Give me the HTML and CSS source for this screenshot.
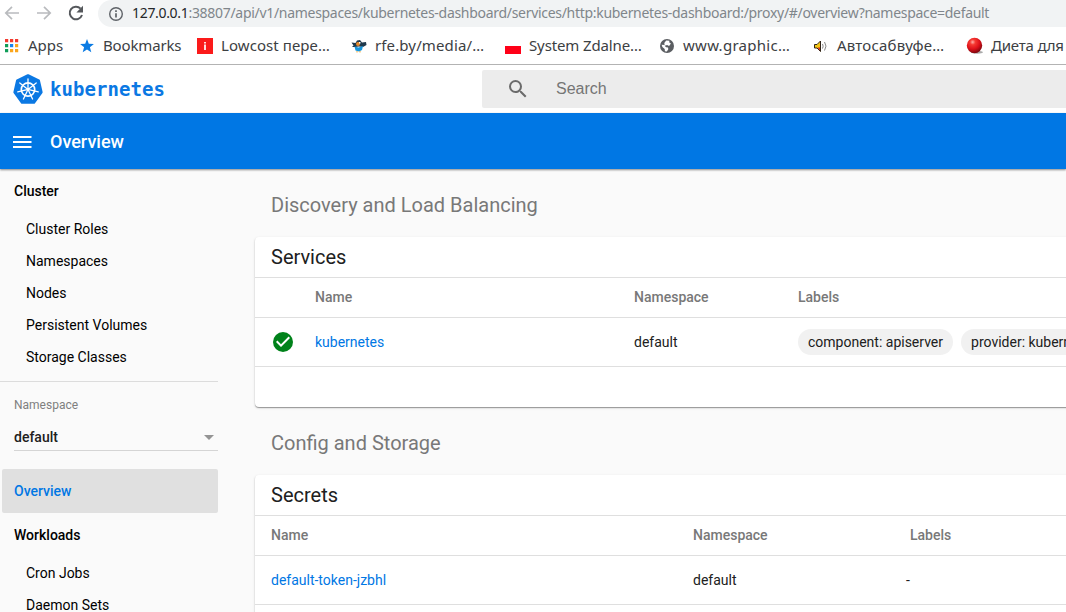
FILE: index.html
```html
<!DOCTYPE html>
<html lang="en">
<head>
<meta charset="utf-8">
<title>Kubernetes Dashboard</title>
<link rel="stylesheet" href="styles.css">
</head>
<body>
<div class="browser">
  <div class="navbar">
    <svg class="nav-icons" width="98" height="28" viewBox="0 0 98 28" fill="none">
      <path d="M19 13H6M12 6.800L5.800 13l6.200 6.200" stroke="#b9bbbe" stroke-width="1.700"/>
      <path d="M37 13h13M44 6.800l6.200 6.200-6.200 6.200" stroke="#b9bbbe" stroke-width="1.700"/>
      <path d="M80.600 8.600A6.300 6.300 0 1 0 82 15" stroke="#55585c" stroke-width="2"/>
      <path d="M83 5.800v6.600h-6.600z" fill="#55585c"/>
    </svg>
    <div class="omnibox">
      <svg class="info" width="16" height="16" viewBox="0 0 16 16" fill="none">
        <circle cx="8" cy="8" r="6.300" stroke="#5f6368" stroke-width="1.400"/>
        <path d="M8 7.200v4.200M8 4.300v1.600" stroke="#5f6368" stroke-width="1.700"/>
      </svg>
      <span class="url"><span class="host">127.0.0.1</span><span class="path">:38807/api/v1/namespaces/kubernetes-dashboard/services/http:kubernetes-dashboard:/proxy/#/overview?namespace=default</span></span>
    </div>
  </div>
  <div class="bookmarks">
    <span class="bm bm-apps">
      <svg width="14" height="14" viewBox="0 0 14 14"><path fill="#f23b2f" d="M0 0h3.200v3.200H0zM5 0h3.200v3.200H5zM10 0h3.200v3.200H10z"/><path fill="#0f9d58" d="M0 5h3.200v3.200H0zM0 10h3.200v3.200H0z"/><path fill="#1a84ee" d="M5 5h3.200v3.200H5z"/><path fill="#fba61c" d="M10 5h3.200v3.200H10zM5 10h3.200v3.200H5zM10 10h3.200v3.200H10z"/></svg>
      <span>Apps</span></span>
    <span class="bm bm-star">
      <svg width="14" height="14" viewBox="0 0 14 14"><path fill="#0b7be3" d="M7 0l1.800 4.800 5.100.2-4 3.200 1.400 5L7 10.400l-4.300 2.800 1.400-5L.1 5l5.100-.2z"/></svg>
      <span>Bookmarks</span></span>
    <span class="bm bm-low">
      <svg width="16" height="16" viewBox="0 0 16 16"><path fill="#fb1a1a" d="M0 0h16v16H0z"/><path fill="#fff" fill-opacity=".85" d="M7 4h2v1.500H7zM7 6.500h2V12H7z"/></svg>
      <span>Lowcost пере…</span></span>
    <span class="bm bm-rfe">
      <svg width="16" height="16" viewBox="0 0 16 16"><path fill="#20394c" d="M.5 4.500l4 .5L6 2.500l3-.5 2 2.500 4-.5.5 3-3.500 2-4-.5-4 .5-3 0 1.500-1.500z"/><circle cx="7" cy="6" r="2" fill="#e98a28"/><path fill="#1595dc" d="M3.500 8.500l4 1 4.500-1.500-1 4-3 1.500-3.500-1z"/><path stroke="#eda633" d="M6 13v1.500M9 13v1.500"/><path fill="#fff" d="M8 4h1.500v1.500H8z"/></svg>
      <span>rfe.by/media/…</span></span>
    <span class="bm bm-sys">
      <svg width="16" height="16" viewBox="0 0 16 16"><path fill="#ff0018" d="M0 8h16v8H0z"/></svg>
      <span>System Zdalne…</span></span>
    <span class="bm bm-www">
      <svg width="14" height="14" viewBox="0 0 14 14"><circle cx="7" cy="7" r="7" fill="#5b5e62"/><path fill="#fff" d="M6.200 1.500l3.300.2-.4 1.600 1.800 1.200-1.800 2.600-2-1.100-2.500.7 1.500 1.600 1.900.1.300 1.800-1.500 2.400-1.900-.4-.2-2.100-2.300-2.100-.8-2.300 3 .3L4.300 4z"/></svg>
      <span>www.graphic…</span></span>
    <span class="bm bm-avto">
      <svg width="16" height="16" viewBox="0 0 16 16"><path d="M1.500 6.500h2.500L7.500 3v10.500L4 10H1.500z" fill="#f3c715" stroke="#302418"/><path d="M4.500 9.500h2.500v3z" fill="#d52a1c"/><path d="M9.500 6q1.300 2.200 0 4.500M11.500 4q3 4 0 8.500" fill="none" stroke="#888"/></svg>
      <span>Автосабвуфе…</span></span>
    <span class="bm bm-diet">
      <svg width="18" height="18" viewBox="0 0 18 18"><defs><radialGradient id="ball" cx=".38" cy=".28" r=".7"><stop offset="0" stop-color="#ffb0a8"/><stop offset=".25" stop-color="#f53932"/><stop offset=".65" stop-color="#dd1019"/><stop offset="1" stop-color="#850810"/></radialGradient></defs><ellipse cx="11" cy="15.300" rx="6" ry="1.500" fill="#aaa"/><circle cx="8.500" cy="8.500" r="7.700" fill="url(#ball)"/></svg>
      <span>Диета для</span></span>
  </div>
</div>
<header class="topbar">
  <svg class="logo" width="30" height="30" viewBox="0 0 30 30">
    <path d="M15 1.500l10.700 5.100L28.400 18.200 21 28.400H9L1.600 18.200 4.300 6.600z" fill="#0b78e3" stroke="#0b78e3" stroke-width="2.500" stroke-linejoin="round"/>
    <g fill="none" stroke="#fff" stroke-linecap="round">
      <circle cx="15" cy="15.500" r="6.700" stroke-width="1.700"/>
      <g stroke-width="1.300">
        <path id="spoke" d="M15 13.500V5"/>
        <use href="#spoke" transform="rotate(51.430 15 15.500)"/>
        <use href="#spoke" transform="rotate(102.860 15 15.500)"/>
        <use href="#spoke" transform="rotate(154.290 15 15.500)"/>
        <use href="#spoke" transform="rotate(205.710 15 15.500)"/>
        <use href="#spoke" transform="rotate(257.140 15 15.500)"/>
        <use href="#spoke" transform="rotate(308.570 15 15.500)"/>
      </g>
    </g>
    <circle cx="15" cy="15.500" r="1.800" fill="#fff"/>
  </svg>
  <span class="brand">kubernetes</span>
  <div class="search">
    <svg width="24" height="24" viewBox="0 0 24 24"><path fill="#6b6b6b" d="M15.500 14h-.79l-.28-.27A6.470 6.470 0 0 0 16 9.500 6.500 6.500 0 1 0 9.500 16c1.610 0 3.090-.59 4.230-1.570l.27.28v.79l5 4.990L20.490 19l-4.990-5zm-6 0C7.010 14 5 11.990 5 9.500S7.010 5 9.500 5 14 7.010 14 9.500 11.990 14 9.500 14z"/></svg>
    <span>Search</span>
  </div>
</header>
<div class="actionbar">
  <svg width="24" height="24" viewBox="0 0 24 24"><path fill="#fff" d="M3 18h18.500v-2H3zM3 13h18.500v-2H3zM3 8h18.500V6H3z"/></svg>
  <span>Overview</span>
</div>
<div class="body">
  <nav class="side">
    <div class="group">Cluster</div>
    <div class="item">Cluster Roles</div>
    <div class="item">Namespaces</div>
    <div class="item">Nodes</div>
    <div class="item">Persistent Volumes</div>
    <div class="item">Storage Classes</div>
    <div class="ns">
      <div class="ns-label">Namespace</div>
      <div class="ns-select"><span>default</span><svg width="10" height="6" viewBox="0 0 10 6"><path fill="#949494" d="M0 1h10L5 6z"/></svg></div>
    </div>
    <div class="active">Overview</div>
    <div class="group work">Workloads</div>
    <div class="item">Cron Jobs</div>
    <div class="item">Daemon Sets</div>
  </nav>
  <main class="content">
    <h2 class="section">Discovery and Load Balancing</h2>
    <section class="card">
      <h3 class="card-title">Services</h3>
      <div class="row services head"><span></span><span>Name</span><span>Namespace</span><span>Labels</span></div>
      <div class="row services">
        <svg width="24" height="24" viewBox="0 0 24 24"><path fill="#00821a" d="M12 2a10 10 0 1 0 0 20 10 10 0 0 0 0-20z"/><path fill="#fff" d="M10 17l-5-5 1.410-1.410L10 14.170l7.590-7.590L19 8z"/></svg>
        <a class="link">kubernetes</a><span>default</span>
        <span class="chips"><span class="chip">component: apiserver</span><span class="chip">provider: kubernetes</span></span>
      </div>
      <div class="card-foot"></div>
    </section>
    <h2 class="section">Config and Storage</h2>
    <section class="card">
      <h3 class="card-title">Secrets</h3>
      <div class="row secrets head"><span>Name</span><span>Namespace</span><span class="lab">Labels</span></div>
      <div class="row secrets"><a class="link">default-token-jzbhl</a><span>default</span><span>-</span></div>
      <div class="card-foot"></div>
    </section>
  </main>
</div>
</body>
</html>
```
FILE: styles.css
```css
* { box-sizing: border-box; }
html, body { height: 612px; overflow: hidden; }
body { margin: 0; width: 1066px; background: #fafafa; font: 14px/20px Roboto, sans-serif; color: #202020; display: flex; flex-direction: column; }
svg { flex: none; display: block; }
.browser { height: 65px; flex: none; background: #fff; border-bottom: 1px solid #b3b3b3; font-family: "Noto Sans", "Open Sans", sans-serif; white-space: nowrap; overflow: hidden; }
.navbar { height: 27px; display: flex; }
.omnibox { flex: 1; height: 27px; background: #f1f3f4; border-radius: 14px 0 0 14px; display: flex; align-items: center; padding-left: 10px; }
.url { margin-left: 8px; font-size: 14px; line-height: 20px; padding-bottom: 1px; color: #80868b; }
.host { color: #24272a; letter-spacing: -.32px; }
.path { letter-spacing: -.3px; }
.bookmarks { height: 37px; display: grid; grid-template-columns: 80px 116px 154px 154px 156px 153px 153px 100px; color: #3c4043; font-size: 15px; }
.bm { display: flex; align-items: center; }
.bm > span { line-height: 20px; padding-bottom: 2px; }
.bm-apps { padding-left: 5px; gap: 9px; }
.bm-star { gap: 9px; letter-spacing: -.15px; }
.bm-low { padding-left: 1px; gap: 8px; letter-spacing: .08px; }
.bm-rfe { padding-left: 1px; gap: 8px; letter-spacing: .12px; }
.bm-sys { padding-left: 1px; gap: 8px; letter-spacing: -.13px; }
.bm-www { gap: 9px; letter-spacing: .28px; }
.bm-avto { gap: 8px; letter-spacing: .2px; }
.bm-diet { gap: 7px; letter-spacing: -.2px; }
.topbar { height: 48px; flex: none; background: #fff; display: flex; align-items: center; padding-left: 13px; }
.brand { margin-left: 7px; width: 120px; color: #0b78e3; font: bold 19px/24px "DejaVu Sans Mono", monospace; letter-spacing: .05px; }
.search { margin-left: auto; width: 584px; height: 38px; background: #ececec; border-radius: 2px 0 0 2px; display: flex; align-items: center; padding-left: 24px; gap: 26px; font: 16px/20px "Liberation Sans", sans-serif; color: #757575; }
.actionbar { height: 56px; flex: none; background: #0077e4; color: #fff; display: flex; align-items: center; padding: 2px 0 0 10px; gap: 16px; font-size: 18px; font-weight: 500; box-shadow: 0 1px 2px rgba(0,0,0,.45); z-index: 1; position: relative; }
.body { display: flex; flex: 1; min-height: 0; }
.side { width: 218px; flex: none; color: #000; padding-top: 12px; }
.group { font-weight: 500; padding-left: 14px; margin-bottom: 12px; }
.item { height: 32px; line-height: 32px; padding-left: 26px; }
.ns { margin-top: 8px; border-top: 1px solid #dcdcdc; padding: 13px 0 0 14px; }
.ns-label { font-size: 12px; color: #7f7f7f; }
.ns-select { height: 36px; display: flex; align-items: center; justify-content: space-between; padding: 8px 4px 0 0; font-weight: 500; border-bottom: 1px solid #d5d5d5; color: #202020; }
.active { margin: 18px 0 0 2px; height: 44px; line-height: 44px; padding-left: 12px; background: #e0e0e0; color: #0077e4; font-weight: 500; border-radius: 2px; }
.work { margin-top: 12px; }
.content { flex: 1; min-width: 0; padding-left: 37px; overflow: hidden; }
.section { margin: 0; height: 68px; padding: 21px 0 0 16px; font-size: 20px; line-height: 30px; font-weight: 400; color: #787878; }
.card { background: #fff; border-radius: 4px 0 0 4px; width: 830px; box-shadow: 0 1px 1px rgba(0,0,0,.35), 0 1px 3px rgba(0,0,0,.12); }
.card-title { margin: 0; height: 41px; padding-left: 16px; font-size: 20px; line-height: 40px; font-weight: 400; border-bottom: 1px solid #dfdfdf; }
.row { display: grid; align-items: center; height: 49px; padding-left: 16px; border-bottom: 1px solid #dfdfdf; white-space: nowrap; }
.head { height: 40px; padding-bottom: 2px; color: #787878; font-weight: 500; }
.services { grid-template-columns: 44px 319px 164px 1fr; }
.secrets { grid-template-columns: 422px 213px 1fr; }
.lab { padding-left: 4px; }
.link { color: #0077e4; }
.chips { display: flex; gap: 8px; }
.chip { background: #f1f1f1; border-radius: 13px; line-height: 26px; padding: 0 10px; }
.card-foot { height: 40px; }
```
